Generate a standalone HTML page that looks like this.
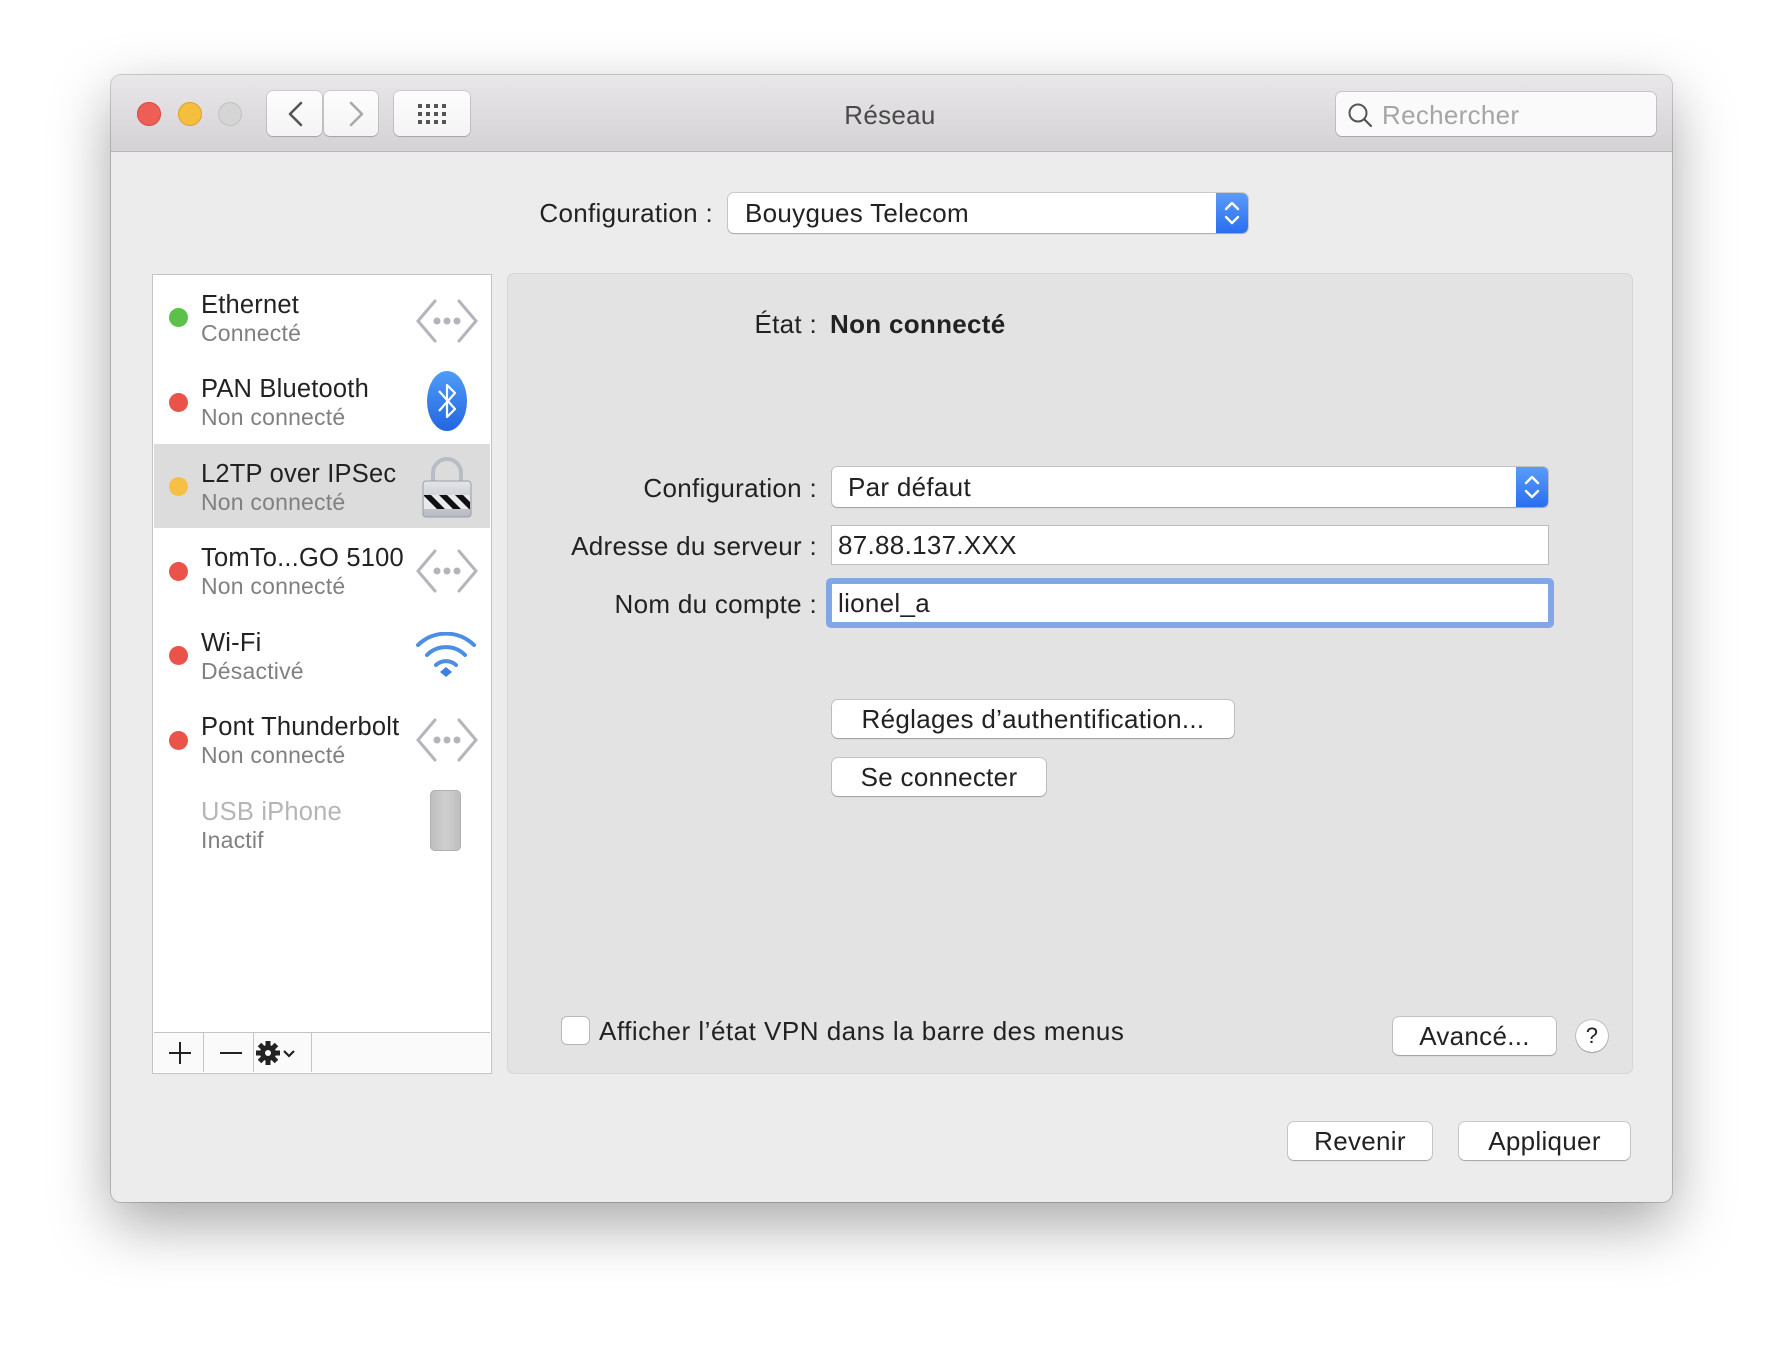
<!DOCTYPE html>
<html><head><meta charset="utf-8"><style>
*{box-sizing:border-box;margin:0;padding:0}
body{width:1784px;height:1350px;background:#fff;font-family:"Liberation Sans",sans-serif;color:#222;position:relative;overflow:hidden}
.a{position:absolute}
.win{left:111px;top:75px;width:1561px;height:1127px;background:#ececec;border-radius:10px;box-shadow:0 22px 60px rgba(0,0,0,.35),0 0 0 1px rgba(0,0,0,.18);overflow:hidden}
.tb{left:0;top:0;width:1561px;height:77px;background:linear-gradient(#e9e7e9,#d4d2d4);border-bottom:1px solid #b8b6b8}
.tl{width:24px;height:24px;border-radius:50%;top:102px}
.btn{background:#fff;border-radius:6px;box-shadow:0 0 0 1px rgba(0,0,0,.14),0 1px 1px rgba(0,0,0,.18);display:flex;align-items:center;justify-content:center;font-size:26px;letter-spacing:.3px;color:#222}
.tbtn{background:linear-gradient(#fdfdfd,#f4f4f4);border-radius:6px;box-shadow:0 0 0 1px rgba(0,0,0,.1),0 1px 1px rgba(0,0,0,.15)}
.t{font-size:26px;line-height:26px;white-space:nowrap;letter-spacing:.3px}
.r{text-align:right}
.nm{font-size:25.5px;line-height:24px;left:201px;white-space:nowrap;color:#222;letter-spacing:.2px}
.sb{font-size:23px;line-height:22px;left:201px;white-space:nowrap;color:#808080;letter-spacing:.2px}
.dot{width:19px;height:19px;border-radius:50%;left:169px}
.field{background:#fff;box-shadow:0 0 0 1px #bcbcbc;font-size:26px;line-height:26px;letter-spacing:.3px;padding-left:6px;display:flex;align-items:center}
</style></head><body>
<div class="a win"></div>
<div class="a tb" style="left:111px;top:75px;border-radius:10px 10px 0 0"></div>
<div class="a tl" style="left:137px;background:#ed5f56;box-shadow:inset 0 0 0 1px #d44e45"></div>
<div class="a tl" style="left:178px;background:#f6be3d;box-shadow:inset 0 0 0 1px #dba331"></div>
<div class="a tl" style="left:218px;background:#d6d5d6;box-shadow:inset 0 0 0 1px #c3c2c3"></div>
<div class="a tbtn" style="left:267px;top:91px;width:55px;height:45px"></div>
<div class="a tbtn" style="left:324px;top:91px;width:54px;height:45px"></div>
<svg class="a" style="left:267px;top:91px" width="111" height="45"><path d="M34 12 L23 23 L34 34" fill="none" stroke="#555" stroke-width="2.6" stroke-linecap="round" stroke-linejoin="round"/><path d="M84 12 L95 23 L84 34" fill="none" stroke="#a8a8a8" stroke-width="2.6" stroke-linecap="round" stroke-linejoin="round"/></svg>
<div class="a tbtn" style="left:394px;top:91px;width:76px;height:45px"></div>
<svg class="a" style="left:418px;top:104px" width="30" height="22" fill="#555"><g><rect x="0" y="0" width="4" height="4"/><rect x="8" y="0" width="4" height="4"/><rect x="16" y="0" width="4" height="4"/><rect x="24" y="0" width="4" height="4"/><rect x="0" y="8" width="4" height="4"/><rect x="8" y="8" width="4" height="4"/><rect x="16" y="8" width="4" height="4"/><rect x="24" y="8" width="4" height="4"/><rect x="0" y="16" width="4" height="4"/><rect x="8" y="16" width="4" height="4"/><rect x="16" y="16" width="4" height="4"/><rect x="24" y="16" width="4" height="4"/></g></svg>
<div class="a t" style="left:790px;top:102px;width:200px;text-align:center;color:#4a4a4a">Réseau</div>
<div class="a" style="left:1336px;top:92px;width:320px;height:44px;background:#fafafa;border-radius:6px;box-shadow:0 0 0 1px rgba(0,0,0,.12),0 1px 1px rgba(0,0,0,.12)"></div>
<svg class="a" style="left:1347px;top:102px" width="28" height="28"><circle cx="11" cy="11" r="8.5" fill="none" stroke="#555" stroke-width="2"/><path d="M17 17 L24 24" stroke="#555" stroke-width="2.2" stroke-linecap="round"/></svg>
<div class="a t" style="left:1382px;top:102px;color:#a5a5a5">Rechercher</div>

<div class="a t r" style="left:480px;top:200px;width:233px">Configuration :</div>
<div class="a btn" style="left:728px;top:193px;width:520px;height:40px;justify-content:flex-start;padding-left:17px;border-radius:6px">Bouygues Telecom</div>
<div class="a" style="left:1216px;top:193px;width:32px;height:40px;background:linear-gradient(#5a9cf8,#2a6ef0);border-radius:0 6px 6px 0"></div>
<svg class="a" style="left:1216px;top:193px" width="32" height="40"><path d="M10 16 L16 10 L22 16 M10 24 L16 30 L22 24" fill="none" stroke="#fff" stroke-width="2.4" stroke-linecap="round" stroke-linejoin="round"/></svg>

<!-- sidebar -->
<div class="a" style="left:153px;top:275px;width:338px;height:798px;background:#fff;box-shadow:0 0 0 1px #c4c4c4"></div>
<div class="a" style="left:154px;top:444px;width:336px;height:84px;background:#dcdcdc"></div>
<div class="a dot" style="top:308px;background:#5bc149"></div>
<div class="a nm" style="top:293px">Ethernet</div><div class="a sb" style="top:322px">Connecté</div>
<div class="a dot" style="top:393px;background:#e9534a"></div>
<div class="a nm" style="top:377px">PAN Bluetooth</div><div class="a sb" style="top:406px">Non connecté</div>
<div class="a dot" style="top:477px;background:#f8c042"></div>
<div class="a nm" style="top:462px">L2TP over IPSec</div><div class="a sb" style="top:491px">Non connecté</div>
<div class="a dot" style="top:562px;background:#e9534a"></div>
<div class="a nm" style="top:546px">TomTo...GO 5100</div><div class="a sb" style="top:575px">Non connecté</div>
<div class="a dot" style="top:646px;background:#e9534a"></div>
<div class="a nm" style="top:631px">Wi-Fi</div><div class="a sb" style="top:660px">Désactivé</div>
<div class="a dot" style="top:731px;background:#e9534a"></div>
<div class="a nm" style="top:715px">Pont Thunderbolt</div><div class="a sb" style="top:744px">Non connecté</div>
<div class="a nm" style="top:800px;color:#b5b5b5">USB iPhone</div><div class="a sb" style="top:829px">Inactif</div>

<svg class="a" style="left:415px;top:299px" width="64" height="44"><g fill="none" stroke="#b4b4bc" stroke-width="3" stroke-linecap="round"><path d="M20 2 L3 22 L20 42"/><path d="M44 2 L61 22 L44 42"/></g><g fill="#b4b4bc"><circle cx="22" cy="22" r="3.5"/><circle cx="32" cy="22" r="3.5"/><circle cx="42" cy="22" r="3.5"/></g></svg>
<svg class="a" style="left:415px;top:718px" width="64" height="44"><g fill="none" stroke="#b4b4bc" stroke-width="3" stroke-linecap="round"><path d="M20 2 L3 22 L20 42"/><path d="M44 2 L61 22 L44 42"/></g><g fill="#b4b4bc"><circle cx="22" cy="22" r="3.5"/><circle cx="32" cy="22" r="3.5"/><circle cx="42" cy="22" r="3.5"/></g></svg>
<svg class="a" style="left:415px;top:549px" width="64" height="44"><g fill="none" stroke="#b4b4bc" stroke-width="3" stroke-linecap="round"><path d="M20 2 L3 22 L20 42"/><path d="M44 2 L61 22 L44 42"/></g><g fill="#b4b4bc"><circle cx="22" cy="22" r="3.5"/><circle cx="32" cy="22" r="3.5"/><circle cx="42" cy="22" r="3.5"/></g></svg>
<svg class="a" style="left:426px;top:370px" width="42" height="62"><defs><linearGradient id="bt" x1="0" y1="0" x2="0" y2="1"><stop offset="0" stop-color="#4f9cf7"/><stop offset="1" stop-color="#2366e0"/></linearGradient></defs><ellipse cx="21" cy="31" rx="20" ry="30" fill="url(#bt)"/><path d="M13 21 L29 39 L21 47 L21 15 L29 23 L13 41" fill="none" stroke="#fff" stroke-width="2.2" stroke-linejoin="round"/></svg>
<svg class="a" style="left:421px;top:453px" width="52" height="66"><path d="M12 30 V20 A14 14 0 0 1 40 20 V30" fill="none" stroke="#b8bcc4" stroke-width="4"/><defs><linearGradient id="lk" x1="0" y1="0" x2="0" y2="1"><stop offset="0" stop-color="#e2e4e8"/><stop offset="1" stop-color="#b7bbc2"/></linearGradient><clipPath id="lc"><rect x="3" y="42" width="46" height="14"/></clipPath></defs><rect x="2" y="28" width="48" height="36" rx="3" fill="url(#lk)" stroke="#9a9ea6"/><rect x="3" y="42" width="46" height="14" fill="#e8eaec"/><g clip-path="url(#lc)" fill="#111"><path d="M2 42 h8 l14 14 h-8 z"/><path d="M18 42 h8 l14 14 h-8 z"/><path d="M34 42 h8 l14 14 h-8 z"/></g></svg>
<svg class="a" style="left:414px;top:632px" width="64" height="46"><g fill="none" stroke="#4a8ee6" stroke-width="4" stroke-linecap="round"><path d="M4 13 A40 40 0 0 1 60 13"/><path d="M13 23 A27 27 0 0 1 51 23"/><path d="M22 33 A15 15 0 0 1 42 33"/></g><path d="M26 40 L32 35 L38 40 L32 45 Z" fill="#3d82e0"/></svg>
<div class="a" style="left:430px;top:790px;width:31px;height:61px;border-radius:5px;background:linear-gradient(90deg,#bdbdbd,#cfcfcf,#bdbdbd);box-shadow:inset 0 0 0 1px #b0b0b0"></div>

<div class="a" style="left:154px;top:1032px;width:336px;height:1px;background:#c4c4c4"></div>
<div class="a" style="left:154px;top:1033px;width:336px;height:39px;background:#fafafa"></div>
<div class="a" style="left:203px;top:1033px;width:1px;height:39px;background:#c4c4c4"></div>
<div class="a" style="left:253px;top:1033px;width:1px;height:39px;background:#c4c4c4"></div>
<div class="a" style="left:311px;top:1033px;width:1px;height:39px;background:#c4c4c4"></div>
<svg class="a" style="left:154px;top:1033px" width="160" height="39"><path d="M26 9 V31 M15 20 H37" stroke="#222" stroke-width="2"/><path d="M66 20 H88" stroke="#222" stroke-width="2"/><g transform="translate(114 20)" fill="#222"><circle r="8"/><g><rect x="-2.5" y="-12" width="5" height="24"/><rect x="-2.5" y="-12" width="5" height="24" transform="rotate(45)"/><rect x="-2.5" y="-12" width="5" height="24" transform="rotate(90)"/><rect x="-2.5" y="-12" width="5" height="24" transform="rotate(135)"/></g><circle r="3" fill="#fafafa"/></g><path d="M130 18 L135 23 L140 18" fill="none" stroke="#222" stroke-width="2.2"/></svg>

<!-- right panel -->
<div class="a" style="left:508px;top:274px;width:1124px;height:799px;background:#e3e3e3;border-radius:6px;box-shadow:0 0 0 1px #d6d6d6"></div>
<div class="a t r" style="left:600px;top:311px;width:217px">État :</div>
<div class="a t" style="left:830px;top:311px;font-weight:bold">Non connecté</div>
<div class="a t r" style="left:520px;top:475px;width:297px">Configuration :</div>
<div class="a btn" style="left:832px;top:467px;width:716px;height:40px;justify-content:flex-start;padding-left:16px;border-radius:5px">Par défaut</div>
<div class="a" style="left:1516px;top:467px;width:32px;height:40px;background:linear-gradient(#5a9cf8,#2a6ef0);border-radius:0 5px 5px 0"></div>
<svg class="a" style="left:1516px;top:467px" width="32" height="40"><path d="M10 16 L16 10 L22 16 M10 24 L16 30 L22 24" fill="none" stroke="#fff" stroke-width="2.4" stroke-linecap="round" stroke-linejoin="round"/></svg>
<div class="a t r" style="left:500px;top:533px;width:317px">Adresse du serveur :</div>
<div class="a field" style="left:832px;top:526px;width:716px;height:38px">87.88.137.XXX</div>
<div class="a t r" style="left:520px;top:591px;width:297px">Nom du compte :</div>
<div class="a" style="left:826px;top:578px;width:728px;height:50px;border-radius:5px;background:#83a6e6"></div>
<div class="a field" style="left:832px;top:584px;width:716px;height:38px;box-shadow:none">lionel_a</div>
<div class="a btn" style="left:832px;top:700px;width:402px;height:38px">Réglages d’authentification...</div>
<div class="a btn" style="left:832px;top:758px;width:214px;height:38px">Se connecter</div>
<div class="a" style="left:562px;top:1017px;width:27px;height:27px;background:#fff;border-radius:5px;box-shadow:0 0 0 1px #b8b8b8,0 1px 1px rgba(0,0,0,.1)"></div>
<div class="a t" style="left:599px;top:1018px;letter-spacing:.5px">Afficher l’état VPN dans la barre des menus</div>
<div class="a btn" style="left:1393px;top:1017px;width:163px;height:38px">Avancé...</div>
<div class="a btn" style="left:1576px;top:1020px;width:32px;height:32px;border-radius:50%;font-size:22px">?</div>
<div class="a btn" style="left:1288px;top:1122px;width:144px;height:38px">Revenir</div>
<div class="a btn" style="left:1459px;top:1122px;width:171px;height:38px">Appliquer</div>
</body></html>
